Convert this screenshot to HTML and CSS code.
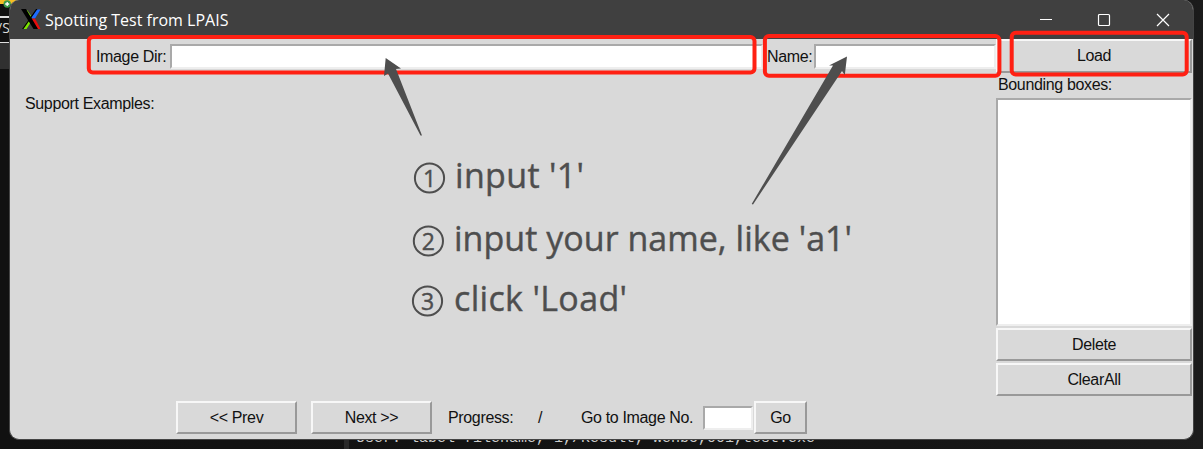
FILE: index.html
```html
<!DOCTYPE html>
<html lang="en">
<head>
<meta charset="utf-8">
<title>Spotting Test from LPAIS</title>
<link rel="stylesheet" href="styles.css">
</head>
<body>
<div class="desktop">
  <div class="backdrop">
    <div class="back-tab"><svg width="12" height="10" viewBox="0 0 12 10"><circle cx="7.2" cy="4" r="3.7" fill="#3d9b48"/><path d="M7.2 2v4M5.2 4h4" stroke="#fff" stroke-width="1.3"/></svg></div>
    <div class="back-input">/S</div>
    <div class="back-strip"></div>
  </div>
  <div class="terminal"><span class="terminal-text">User: label filename, 1,/Result, wenbo,001,test.exe</span></div>

  <main class="window">
    <header class="titlebar">
      <svg class="logo" width="20" height="20" viewBox="0 0 20 20">
        <path d="M10.5 8L15 .5h4.5L14 9.5h-3z" fill="#1d6cff"/>
        <path d="M3.5 1.5h3l4 6-1.5 3z M6.5 12l3.5 1-4.5 7H1.5z" fill="#7de600"/>
        <path d="M11 9.5h3l5.5 10.5h-4l-4-7z" fill="#e60c0c"/>
        <path d="M0 0h5l12 20h-4.5z M15 0h1.5L2.5 20H1z" fill="#000"/>
      </svg>
      <h1 class="title">Spotting Test from LPAIS</h1>
      <svg class="controls" width="132" height="14" viewBox="0 0 132 14" fill="none" stroke="#fff" stroke-width="1.2">
        <path d="M0 6.5h12"/><rect x="58.5" y="1.5" width="11" height="11" rx="1"/><path d="M117 1l12 12M129 1l-12 12"/>
      </svg>
    </header>
    <div class="body">
      <section class="left">
        <div class="fields">
          <label class="label image-label">Image Dir:</label><div class="entry dir-entry"></div>
          <label class="label name-label">Name:</label><div class="entry name-entry"></div>
        </div>
        <div class="label support">Support Examples:</div>
        <footer class="nav">
          <div class="button nav-button">&lt;&lt; Prev</div>
          <div class="button nav-button">Next &gt;&gt;</div>
          <span class="label progress">Progress:</span>
          <span class="label slash">/</span>
          <span class="label goto">Go to Image No.</span>
          <div class="entry goto-entry"></div>
          <div class="button go-button">Go</div>
        </footer>
      </section>
      <aside class="side">
        <div class="button load">Load</div>
        <div class="label boxes">Bounding boxes:</div>
        <div class="entry list"></div>
        <div class="button">Delete</div>
        <div class="button">ClearAll</div>
      </aside>
    </div>
  </main>

  <svg class="notes" width="1203" height="449" viewBox="0 0 1203 449">
    <g class="frames">
      <rect x="88.8" y="37" width="665.7" height="35.5" rx="4"/>
      <rect x="764.9" y="36" width="234.5" height="39.7" rx="4"/>
      <rect x="1011.7" y="32.7" width="175" height="41.8" rx="4"/>
    </g>
    <g class="arrows">
      <path d="M385.7 58L401 68.5 396 69 422 135.5 420.5 135.5 388 73.5 384 76z"/>
      <path d="M847 56.5L844.8 75 842 71 753 204.5 751.7 204 833 65.5 829 65.5z"/>
    </g>
    <g class="rings"><circle cx="429.5" cy="178" r="14.6"/><circle cx="428.4" cy="241" r="14.6"/><circle cx="427.5" cy="301" r="14.6"/></g>
    <g class="digits"><text x="429.5" y="186.5">1</text><text x="428.4" y="249.5">2</text><text x="427.5" y="309.5">3</text></g>
    <g class="steps">
      <text x="455" y="187.5" textLength="129">input '1'</text>
      <text x="454" y="250.5" textLength="398">input your name, like 'a1'</text>
      <text x="454" y="310.5" textLength="173">click 'Load'</text>
    </g>
  </svg>
</div>
</body>
</html>
```

FILE: styles.css
```css
* { box-sizing: border-box; }
body { margin: 0; background: #111; }
.desktop { position: relative; width: 1203px; height: 449px; overflow: hidden; background: linear-gradient(90deg, #111 0%, #151515 75%, #1b1b1b 100%); }
.backdrop { width: 30px; display: flex; flex-direction: column; }
.back-tab { height: 16px; background: linear-gradient(#f5bd25 0 4px, #111 4px); }
.back-tab svg { display: block; }
.back-input { height: 27px; border: solid #ddd; border-width: 2px 0 1px; color: #ddd; font: 14px/20px "Open Sans", sans-serif; text-indent: -3px; }
.back-strip { height: 26px; background: #303030; }
.terminal { position: absolute; left: 344px; top: 430px; width: 859px; height: 19px; border-left: 5px solid #292929; }
.terminal-text { display: block; padding-left: 7px; color: #ccc; font: 15px/19px "Liberation Mono", monospace; margin-top: -1px; white-space: pre; }
.window { position: absolute; left: 9px; top: 0; width: 1185px; height: 440px; display: flex; flex-direction: column; overflow: hidden; border: 1px solid #444; border-top: 0; border-radius: 10px; background: #d9d9d9; }
.titlebar { height: 39px; flex: none; display: flex; align-items: center; padding: 0 21px 0 11px; background: #404040; color: #fff; }
.logo { flex: none; margin: 0 4px 2px 0; }
.title { margin: 0; font: 16px/20px "Open Sans", sans-serif; letter-spacing: 0; }
.controls { margin-left: auto; }
.body { display: flex; flex: 1; min-height: 0; }
.left { width: 986px; padding-top: 5px; display: flex; flex-direction: column; }
.fields { display: flex; height: 25px; align-items: center; }
.label, .button { font: 16px/20px "Liberation Sans", Arial, sans-serif; letter-spacing: -.35px; color: #111; white-space: nowrap; }
.image-label { width: 159px; padding-left: 86px; }
.entry { background: #fff; border: 2px solid; border-color: #a9a9a9 #eee #eee #a9a9a9; }
.dir-entry { width: 593px; height: 25px; margin-left: 1px; }
.name-label { width: 47px; margin: 0 0 0 4px; }
.name-entry { width: 182px; height: 25px; }
.support { margin: 25px 0 0 15px; }
.nav { display: flex; align-items: center; height: 33px; margin: auto 0 5px 166px; }
.button { display: flex; align-items: center; justify-content: center; height: 33px; background: #d9d9d9; border: 2px solid; border-color: #f7f7f7 #999 #999 #f7f7f7; }
.nav-button { width: 121px; margin-right: 14px; }
.progress { width: 90px; margin-left: 2px; }
.slash { width: 43px; }
.goto { width: 122px; }
.goto-entry { width: 50px; height: 24px; }
.go-button { width: 53px; margin-left: 1px; }
.side { width: 196px; display: flex; flex-direction: column; gap: 2px; }
.boxes { height: 21px; padding-left: 2px; }
.list { height: 228px; }
.load { height: 34px; }
.notes { position: absolute; left: 0; top: 0; pointer-events: none; }
.frames { fill: none; stroke: #ff2013; stroke-width: 4; }
.arrows { fill: #4e4e4e; }
.rings { fill: none; stroke: #4e4e4e; stroke-width: 2; }
.digits { fill: #4e4e4e; stroke: #4e4e4e; stroke-width: .4; font: 23px "Open Sans", sans-serif; text-anchor: middle; }
.steps { fill: #4e4e4e; stroke: #4e4e4e; stroke-width: .4; font: 34px "Open Sans", sans-serif; }
```
